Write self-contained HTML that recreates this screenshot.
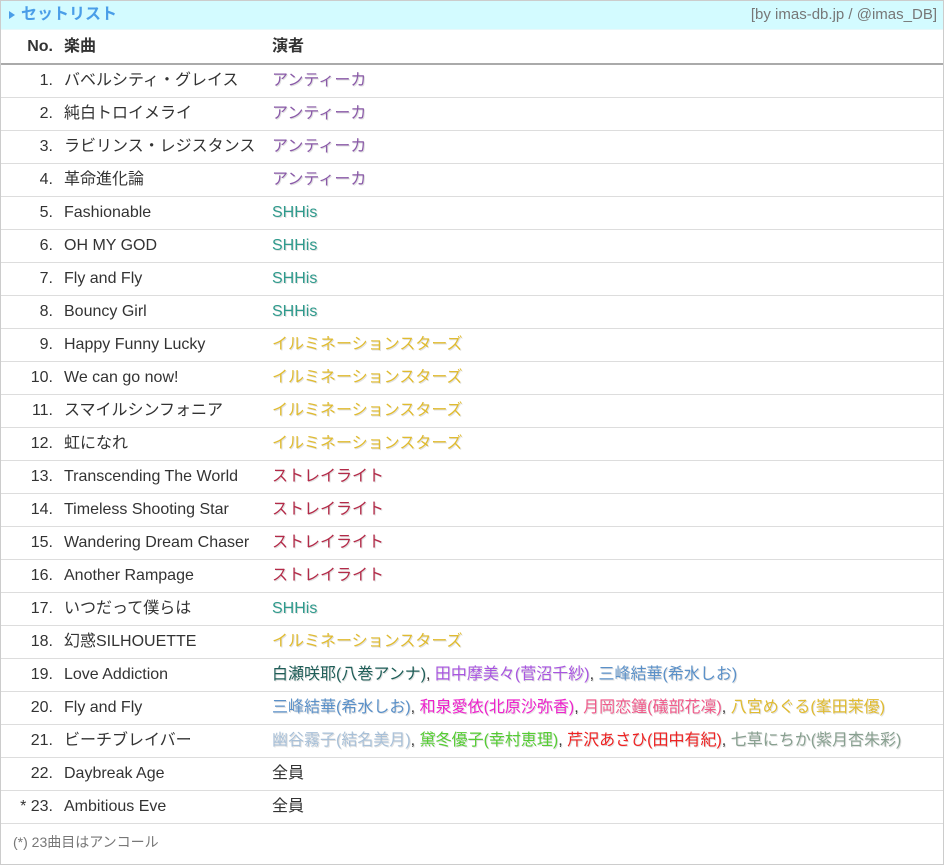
<!DOCTYPE html>
<html><head><meta charset="utf-8"><style>
body{margin:0;width:944px;height:865px;background:#fff;font-family:"Liberation Sans","Noto Sans CJK JP",sans-serif;color:#333;}
.box{position:absolute;left:0;top:0;width:942px;height:863px;border:1px solid #ccc;}
.hd{height:28px;background:#d3fbff;border-bottom:1px solid #e8f8fa;position:relative;}
.hd .t{position:absolute;left:20px;top:4px;font-size:16px;line-height:20px;font-weight:bold;color:#4a9ee8;}
.hd .tri{position:absolute;left:8px;top:10px;width:0;height:0;border-left:6px solid #4a9ee8;border-top:4px solid transparent;border-bottom:4px solid transparent;}
.hd .r{position:absolute;right:6px;top:5px;font-size:15px;line-height:18px;color:#777;}
table{border-collapse:collapse;width:942px;font-size:16px;}
td,th{height:32px;padding:0;border-bottom:1px solid #ddd;white-space:nowrap;vertical-align:middle;line-height:20px;}
td span,td{vertical-align:middle;}
th{font-weight:bold;text-align:left;border-bottom:2px solid #aaa;height:33px;}
.n{width:52px;text-align:right;padding-right:11px;}
.s{width:208px;}
td.p{text-shadow:1px 1px 0 rgba(0,0,0,0.12);}
.a{color:#8a5aa8}.h{color:#2e9a8c}.i{color:#e0bb30}.st{color:#b32a48}
.foot{position:absolute;left:12px;top:832px;font-size:14px;line-height:18px;color:#777;}
</style></head><body><div class="box">
<div class="hd"><div class="tri"></div><div class="t">セットリスト</div><div class="r">[by imas-db.jp / @imas_DB]</div></div>
<table>
<tr><th class="n" style="text-align:right">No.</th><th class="s">楽曲</th><th>演者</th></tr>
<tr><td class="n">1.</td><td>バベルシティ・グレイス</td><td class="p a">アンティーカ</td></tr>
<tr><td class="n">2.</td><td>純白トロイメライ</td><td class="p a">アンティーカ</td></tr>
<tr><td class="n">3.</td><td>ラビリンス・レジスタンス</td><td class="p a">アンティーカ</td></tr>
<tr><td class="n">4.</td><td>革命進化論</td><td class="p a">アンティーカ</td></tr>
<tr><td class="n">5.</td><td>Fashionable</td><td class="p h">SHHis</td></tr>
<tr><td class="n">6.</td><td>OH MY GOD</td><td class="p h">SHHis</td></tr>
<tr><td class="n">7.</td><td>Fly and Fly</td><td class="p h">SHHis</td></tr>
<tr><td class="n">8.</td><td>Bouncy Girl</td><td class="p h">SHHis</td></tr>
<tr><td class="n">9.</td><td>Happy Funny Lucky</td><td class="p i">イルミネーションスターズ</td></tr>
<tr><td class="n">10.</td><td>We can go now!</td><td class="p i">イルミネーションスターズ</td></tr>
<tr><td class="n">11.</td><td>スマイルシンフォニア</td><td class="p i">イルミネーションスターズ</td></tr>
<tr><td class="n">12.</td><td>虹になれ</td><td class="p i">イルミネーションスターズ</td></tr>
<tr><td class="n">13.</td><td>Transcending The World</td><td class="p st">ストレイライト</td></tr>
<tr><td class="n">14.</td><td>Timeless Shooting Star</td><td class="p st">ストレイライト</td></tr>
<tr><td class="n">15.</td><td>Wandering Dream Chaser</td><td class="p st">ストレイライト</td></tr>
<tr><td class="n">16.</td><td>Another Rampage</td><td class="p st">ストレイライト</td></tr>
<tr><td class="n">17.</td><td>いつだって僕らは</td><td class="p h">SHHis</td></tr>
<tr><td class="n">18.</td><td>幻惑SILHOUETTE</td><td class="p i">イルミネーションスターズ</td></tr>
<tr><td class="n">19.</td><td>Love Addiction</td><td class="p"><span style="color:#1f5e58">白瀬咲耶(八巻アンナ)</span>, <span style="color:#a855e0">田中摩美々(菅沼千紗)</span>, <span style="color:#5a90c8">三峰結華(希水しお)</span></td></tr>
<tr><td class="n">20.</td><td>Fly and Fly</td><td class="p"><span style="color:#5a90c8">三峰結華(希水しお)</span>, <span style="color:#ee22cc">和泉愛依(北原沙弥香)</span>, <span style="color:#f05a8a">月岡恋鐘(礒部花凜)</span>, <span style="color:#e0bb30">八宮めぐる(峯田茉優)</span></td></tr>
<tr><td class="n">21.</td><td>ビーチブレイバー</td><td class="p"><span style="color:#a8c0d8">幽谷霧子(結名美月)</span>, <span style="color:#55cc33">黛冬優子(幸村恵理)</span>, <span style="color:#ee2222">芹沢あさひ(田中有紀)</span>, <span style="color:#88a090">七草にちか(紫月杏朱彩)</span></td></tr>
<tr><td class="n">22.</td><td>Daybreak Age</td><td>全員</td></tr>
<tr><td class="n">* 23.</td><td>Ambitious Eve</td><td>全員</td></tr>
</table>
<div class="foot">(*) 23曲目はアンコール</div>
</div></body></html>
